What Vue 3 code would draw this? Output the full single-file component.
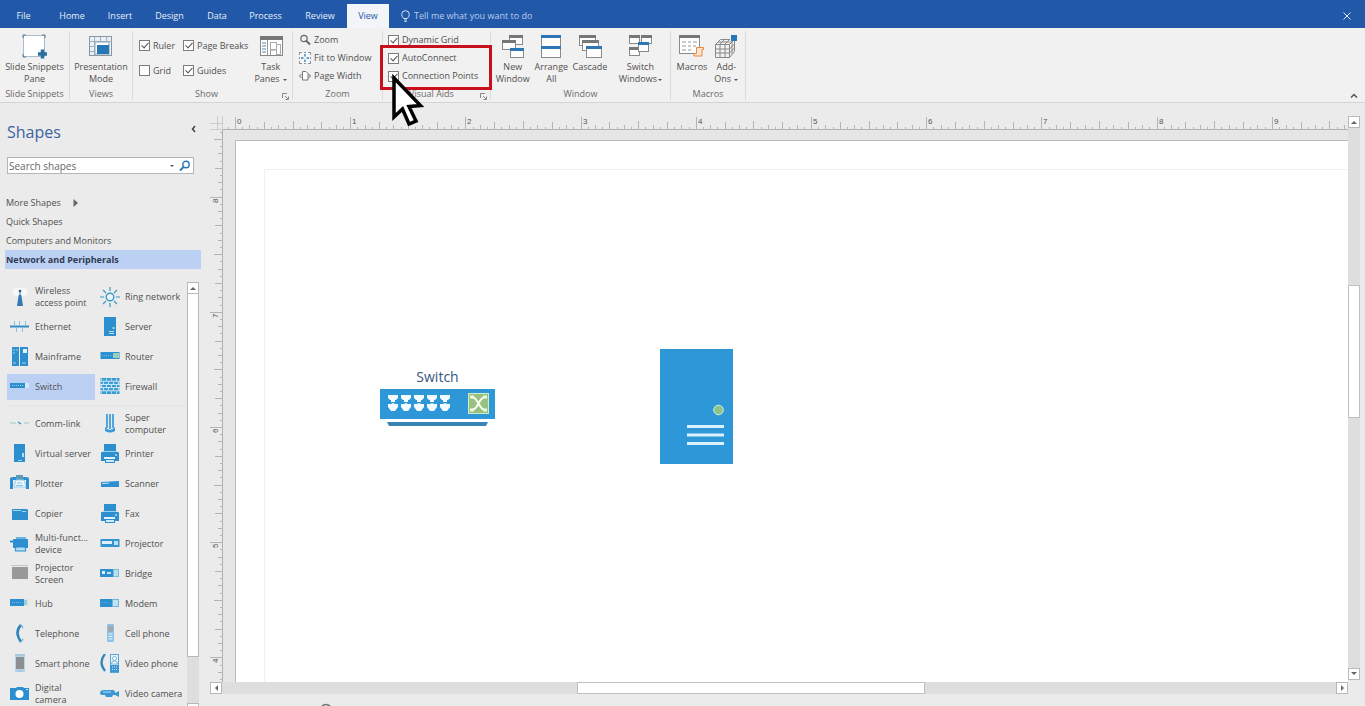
<script setup>
import { ref } from 'vue'

const tabs = [
  { name: 'File', cls: 'file' }, { name: 'Home' }, { name: 'Insert' }, { name: 'Design' },
  { name: 'Data' }, { name: 'Process' }, { name: 'Review' }, { name: 'View' },
]
const activeTab = ref('View')

const show = ref([
  { label: 'Ruler', on: true }, { label: 'Page Breaks', on: true },
  { label: 'Grid', on: false }, { label: 'Guides', on: true },
])
const aids = ref([
  { label: 'Dynamic Grid', on: true }, { label: 'AutoConnect', on: true }, { label: 'Connection Points', on: true },
])

const win = (x, y, w, h, c) =>
  `<rect x="${x + 0.5}" y="${y + 0.5}" width="${w - 1}" height="${h - 1}" fill="#fdfdfd" stroke="#8a8a8a"/><rect x="${x}" y="${y}" width="${w}" height="3" fill="${c}"/>`

const big = {
  snippet: '<rect x="1.5" y="1.5" width="21" height="21" fill="#fff" stroke="#a9bccd"/><path d="M1 4V1h3M20 1h3v3M1 20v3h3" fill="none" stroke="#5f7890"/><path d="M20.5 15.500v9M16 20h9" stroke="#2a6f9e" stroke-width="3.500"/>',
  present: '<rect x="1.500" y="2.500" width="22" height="19" fill="#e9eff5" stroke="#8a97a3"/><path d="M1 7.500h23M6.500 3v18M12.500 3v4M18.500 3v4M2 12.500h5M2 17.500h5" stroke="#9fb0be"/><rect x="7" y="8" width="14" height="12" fill="#fff" stroke="#8ba3b8"/><rect x="9" y="11" width="12" height="9" fill="#2577b5"/>',
  panes: '<rect x="1.500" y="2.500" width="22" height="19" fill="#fff" stroke="#888"/><rect x="1" y="2" width="23" height="4" fill="#777"/><path d="M8.500 6v15M11.500 21v-5h5" fill="none" stroke="#999"/><path d="M3 9h4M3 12h4M3 15h4M3 18h4" stroke="#5588bb"/><rect x="11.500" y="8.500" width="6" height="7" fill="#fff" stroke="#aaa"/><rect x="17.500" y="10.500" width="4" height="10" fill="#fff" stroke="#aaa"/>',
  newWin: win(8, 1, 14, 10, '#777') + win(1, 6, 14, 10, '#777') + win(9, 14, 14, 10, '#2e75b6'),
  arrange: win(3, 1, 20, 12, '#2e75b6') + win(3, 12, 20, 12, '#2e75b6'),
  cascade: win(1, 1, 17, 11, '#777') + win(4, 6, 17, 11, '#777') + win(8, 12, 16, 12, '#2e75b6'),
  switchWin: win(1, 1, 11, 9, '#777') + win(13, 1, 11, 9, '#777') + win(1, 13, 11, 9, '#777') + win(10, 8, 11, 10, '#2e75b6'),
  macros: win(0, 1, 21, 19, '#777') + '<path d="M3 8h4M9 8h3M14 8h4M3 12h4M9 12h3M14 12h3M3 16h4M9 16h3" stroke="#999"/><path d="M17.500 13.500h7v2h-1.500v6.500h-8v-2.500h2.500z" fill="#fbe3d0" stroke="#e58a45"/>',
  addons: '<path d="M2.500 10.500l5-5h14v12l-5 6h-14zM2.500 10.500h14v13M16.500 10.500l5-5M7 10.500v13M12 10.500v13M2.500 15h14l5-5M2.500 19h14l5-5M7 10l5-5M12 10l5-5M5 8h14v12" fill="none" stroke="#888"/><rect x="17" y="0" width="7" height="7" fill="#f0f0f0"/><rect x="18" y="1" width="6" height="6" fill="#2577b5"/>',
}
const windowBtns = [
  { icon: 'newWin', lines: ['New', 'Window'], w: 'w-new' },
  { icon: 'arrange', lines: ['Arrange', 'All'], w: 'w-arr' },
  { icon: 'cascade', lines: ['Cascade'], w: 'w-cas' },
  { icon: 'switchWin', lines: ['Switch', 'Windows'], w: 'w-swi', drop: true },
]
const zoomBtns = [
  { label: 'Zoom', art: '<circle cx="5" cy="4.500" r="3.200" fill="none" stroke="#666" stroke-width="1.200"/><path d="M7.500 7l3.500 3.500" stroke="#666" stroke-width="1.800"/>' },
  { label: 'Fit to Window', art: '<rect x=".5" y=".5" width="11" height="11" fill="#f7fafc" stroke="#8b949c"/><path d="M4 0v1M8 0v1M4 11v1M8 11v1M0 4h1M0 8h1M11 4h1M11 8h1" stroke="#f1f1f1" stroke-width="2"/><path d="M2 6h2.500M7.500 6H10M6 2v2.500M6 7.500V10" stroke="#3d80b5" stroke-width="1.400"/>' },
  { label: 'Page Width', art: '<path d="M3.500 1.500h3.500l2 2v6.500h-5.500z" fill="#fff" stroke="#777"/><path d="M2.500 4L.5 6l2 2M9.500 4l2 2-2 2" fill="none" stroke="#666"/>' },
]

const B = '#2b8fd0'
const printer = `<rect x="4" y="0" width="12" height="7" fill="${B}"/><path d="M1 9q0-1 1-1h16q1 0 1 1v8H1z" fill="${B}"/><path d="M3 7.500h14" stroke="#9fd0ee"/><rect x="4" y="13" width="11" height="2" fill="#e3f2fb"/><rect x="5.500" y="15.500" width="9" height="3" fill="#cfe8f6" stroke="${B}"/><rect x="15" y="10.500" width="2" height="1" fill="#fff"/>`
const box = (a, b) => `<rect x=".5" y="5" width="19" height="7" fill="${a}"/><rect x="13" y="6" width="6" height="5" fill="${b}"/>`
const groups = [
  [
    { n: 'Wireless\naccess point', art: '<rect x="3" y="1" width="14" height="8" rx="3" fill="#f7f7f7"/><path d="M8.700 8h2.600l1.700 11h-6z" fill="#3579b4"/><circle cx="10" cy="4" r="1.300" fill="#1d5d9b"/><path d="M10 4v5" stroke="#3579b4"/>' },
    { n: 'Ring network', art: '<circle cx="10" cy="10" r="3.800" fill="#eaf6fc" stroke="#3b9ac5" stroke-width="1.400"/><path d="M10 0v4M10 16v4M0 10h4M16 10h4M3 3l3 3M14 14l3 3M3 17l3-3M14 6l3-3" stroke="#3b9ac5" stroke-width="1.200"/>' },
    { n: 'Ethernet', art: '<path d="M0 9.500h19" stroke="#2f8fc4" stroke-width="2"/><path d="M4.500 4v5M9.500 4v5M15.500 4v5M6.500 10v5M12.500 10v5" stroke="#8cbfe0"/>' },
    { n: 'Server', art: `<rect x="4" y="0" width="12" height="19" fill="${B}"/><path d="M9 14.500h5M9 16.500h5" stroke="#bfe0f4"/><circle cx="13.500" cy="11" r="1" fill="#d5ebd0"/>` },
    { n: 'Mainframe', art: `<rect x="2" y="0" width="7" height="19" fill="${B}"/><rect x="10" y="0" width="8" height="19" fill="${B}"/><rect x="13" y="2" width="4" height="4" fill="#e5f3fb"/><path d="M3 3h2M6 3h2M3 6h2M12 16h4M3 16h3" stroke="#a5d2ee"/>` },
    { n: 'Router', art: box(B, '#9fcdbb') + '<path d="M2 8.500h9" stroke="#79bbe4" stroke-dasharray="1 1"/>' },
    { n: 'Switch', on: true, art: '<rect x="0" y="6" width="19" height="5" fill="#d8e8fb"/><rect x="0" y="6" width="15" height="5" fill="#2b8fd0"/><path d="M2 8.500h11" stroke="#a5d2ee" stroke-dasharray="1 1"/>' },
    { n: 'Firewall', art: '<rect x=".5" y="1" width="19" height="16" fill="#3a9ad2"/><path d="M0 4.200h20M0 7.400h20M0 10.600h20M0 13.800h20" stroke="#d9eefa"/><path d="M1 2.500h18M3 6h18M1 9h18M3 12h18M1 15.500h18" stroke="#c5e4f6" stroke-width="2" stroke-dasharray="1 4"/>' },
  ],
  [
    { n: 'Comm-link', art: '<path d="M0 9h6M14 9h5" stroke="#a3c9c5" stroke-width="1.200"/><path d="M8 8l3 2" stroke="#3f93bf" stroke-width="1.500"/>' },
    { n: 'Super\ncomputer', art: '<path d="M6 0h2v14H6zM9 0h2v15H9zM12 0h2v14h-2z" fill="#4fa5dc"/><path d="M5 13q5 6 10 0v4q-5 3-10 0z" fill="#3a9ad6"/>' },
    { n: 'Virtual server', art: `<rect x="4" y="0" width="11" height="18" fill="${B}"/><path d="M13 9v4" stroke="#e4f3fb" stroke-width="1.500"/><rect x="8" y="16" width="4" height="1" fill="#9fd0ee"/>` },
    { n: 'Printer', art: printer },
    { n: 'Plotter', art: `<path d="M0 5q0-2 3-2h13q3 0 3 2v10h-3V6H3v9H0z" fill="${B}"/><rect x="6" y="1" width="7" height="4" fill="#5c9cb8"/><path d="M6 6h8l2 7H4z" fill="#f1f8fd" stroke="#9fcfea"/><path d="M7 9h5M6 11.500h7" stroke="#83bfe4"/>` },
    { n: 'Scanner', art: `<path d="M1 8l18-1v6H1z" fill="${B}"/><path d="M2 9.500l7-.5" stroke="#d0e9f7"/>` },
    { n: 'Copier', art: `<path d="M2 5h15l1 1v10H2z" fill="${B}"/><path d="M3 6.500h8M12 7.500h4" stroke="#a8d5ef"/>` },
    { n: 'Fax', art: printer },
    { n: 'Multi-funct...\ndevice', art: '<path d="M3 6q0-1 1-1h14v9H3z" fill="#2b8fd0"/><path d="M6 3h10v2H6z" fill="#6ab4e2"/><path d="M0 7.500h3" stroke="#2b8fd0" stroke-width="2"/><path d="M6 13h9l1 4H5z" fill="#b5dcf3" stroke="#2b8fd0"/>' },
    { n: 'Projector', art: '<rect x=".5" y="5" width="19" height="8" fill="#3294d0"/><rect x="2" y="7" width="10" height="3" fill="#dff0fa"/><rect x="14" y="7" width="4" height="4" fill="#bfe0f3"/>' },
    { n: 'Projector\nScreen', art: '<path d="M1 1.500h17" stroke="#c5c5c5"/><rect x="2" y="3" width="16" height="12" fill="#999"/>' },
    { n: 'Bridge', art: '<rect x="0" y="5" width="13" height="8" fill="#2b8fd0"/><rect x="2" y="7" width="3" height="3" fill="#e4f3fb"/><rect x="7" y="8" width="4" height="2" fill="#bfe0f3"/><rect x="13.500" y="5.500" width="5" height="7" fill="#b9deee" stroke="#79bcdc"/>' },
    { n: 'Hub', art: '<rect x="0" y="5" width="19" height="7" fill="#dcebd9"/><rect x="0" y="5" width="14" height="7" fill="#2b8fd0"/><path d="M2 8.500h10" stroke="#79bbe4" stroke-dasharray="1 1"/><rect x="14" y="6" width="3" height="5" fill="#9dccdd"/>' },
    { n: 'Modem', art: '<rect x="0" y="5" width="12" height="8" fill="#2b8fd0"/><path d="M2 8.500h8" stroke="#5dabdc" stroke-dasharray="1 1"/><rect x="12.500" y="5.500" width="6" height="7" fill="#bfe3f0" stroke="#6fb6da"/>' },
    { n: 'Telephone', art: '<path d="M11 1q-7 7 0 17" fill="none" stroke="#2f83bd" stroke-width="2.500"/><path d="M11 1l2 3M11 18l2-3" stroke="#7db7dc" stroke-width="1.500"/>' },
    { n: 'Cell phone', art: '<rect x="7" y="0" width="7" height="18" rx="1" fill="#8fc3e4"/><rect x="8" y="2" width="5" height="6" fill="#a3a9ae"/><path d="M8.500 10h4M8.500 12.500h4M8.500 15h4" stroke="#e4f3fb"/>' },
    { n: 'Smart phone', art: '<rect x="5" y="0" width="10" height="18" fill="#bcd5e6"/><rect x="6" y="3" width="8" height="12" fill="#8c8f91"/><path d="M5 1h10M7 17h6" stroke="#8fc0e0"/>' },
    { n: 'Video phone', art: '<path d="M5 0q-7 8 0 17" fill="none" stroke="#2f83bd" stroke-width="2.200"/><rect x="10.500" y=".5" width="8" height="18" fill="#e6f2fa" stroke="#5ba7d8"/><circle cx="14.500" cy="4.500" r="2" fill="#fff" stroke="#78b3d8"/><path d="M11.500 10q0-3 3-3t3 3z" fill="#fff" stroke="#78b3d8"/><rect x="10" y="11" width="9" height="7" fill="#3b97d3"/><path d="M12 13h5M12 15.500h5" stroke="#bfe0f3" stroke-dasharray="1 1"/>' },
    { n: 'Digital\ncamera', art: '<path d="M0 4h6l1-1h6l1 1h5v12H0z" fill="#2b8fd0"/><circle cx="9.500" cy="10" r="4" fill="#fff"/><rect x="16" y="5" width="2" height="1" fill="#cfe8f6"/>' },
    { n: 'Video camera', art: '<path d="M0 9q0-3 4-3h9q2 0 2 3l4-2v6l-4-2H13l-1 2H6l-1-2H2q-2 0-2-2z" fill="#3b97d3"/><path d="M3 8h8" stroke="#b8ddf3"/>' },
  ],
]
const stencils = ['Quick Shapes', 'Computers and Monitors', 'Network and Peripherals']
const activeStencil = ref('Network and Peripherals')

/* Rulers: one inch is 115.2px, divided into sixteenths */
const step = 7.2
const tickLen = (i) => (i % 16 === 0 ? 13 : i % 8 === 0 ? 9 : i % 4 === 0 ? 8 : i % 2 === 0 ? 5 : 3)
const hTicks = Array.from({ length: 158 }, (_, k) => k - 1).map((i) => ({ p: Math.round(12 + i * step) + 0.5, l: tickLen(i) }))
const hNums = Array.from({ length: 10 }, (_, i) => ({ p: Math.round(12 + i * 16 * step) + 2, t: i }))
const vTicks = Array.from({ length: 77 }, (_, k) => k - 1).map((i) => ({ p: Math.round(10 + i * step) - 0.5, l: tickLen(i + 8) }))
const vNums = [8, 7, 6, 5, 4].map((t, k) => ({ p: Math.round(10 + (8 + k * 16) * step) + 5, t }))
</script>

<template>
  <div class="app">
    <header class="tabbar">
      <nav class="tabs">
        <button v-for="t in tabs" :key="t.name" class="tab" :class="[{ active: activeTab === t.name }, 'tab-' + t.name.toLowerCase()]" @click="activeTab = t.name">{{ t.name }}</button>
      </nav>
      <button class="tell">
        <svg width="9" height="12" viewBox="0 0 9 12"><path d="M2.700 8.500Q.7 6.500.7 4.500a3.800 3.800 0 0 1 7.600 0q0 2-2 4zM3 10h3M3.500 11.500h2" fill="none" stroke="#d3e1f5" /></svg>
        Tell me what you want to do
      </button>
      <button class="close" aria-label="Close"><svg width="8" height="8" viewBox="0 0 8 8"><path d="M.5.5l7 7M7.500.5l-7 7" stroke="#dfe8f6" /></svg></button>
    </header>

    <section class="ribbon">
      <div class="group g-snip">
        <div class="gbody"><button class="big"><svg width="26" height="26" viewBox="-1 0 26 26" v-html="big.snippet" /><span>Slide Snippets<br>Pane</span></button></div>
        <div class="gname">Slide Snippets</div>
      </div>
      <div class="group g-views">
        <div class="gbody"><button class="big"><svg width="26" height="26" viewBox="0 0 26 26" v-html="big.present" /><span>Presentation<br>Mode</span></button></div>
        <div class="gname">Views</div>
      </div>
      <div class="group g-show">
        <div class="gbody">
          <div class="checks">
            <label v-for="c in show" :key="c.label" class="check"><input v-model="c.on" type="checkbox">{{ c.label }}</label>
          </div>
          <button class="big"><svg width="26" height="26" viewBox="-1 0 26 26" v-html="big.panes" /><span>Task<br>Panes <i class="drop" /></span></button>
        </div>
        <div class="gname">Show<button class="launch" aria-label="Show settings"><svg width="7" height="7" viewBox="0 0 7 7"><path d="M.5 5V.5H5M3 3l3 3M6.500 3.500v3h-3" fill="none" stroke="#888" /></svg></button></div>
      </div>
      <div class="group g-zoom">
        <div class="gbody col">
          <button v-for="z in zoomBtns" :key="z.label" class="small"><svg width="12" height="12" viewBox="0 0 12 12" v-html="z.art" />{{ z.label }}</button>
        </div>
        <div class="gname">Zoom</div>
      </div>
      <div class="group g-aids">
        <div class="gbody col">
          <label v-for="c in aids" :key="c.label" class="check"><input v-model="c.on" type="checkbox">{{ c.label }}</label>
        </div>
        <div class="gname">Visual Aids<button class="launch" aria-label="Visual aids settings"><svg width="7" height="7" viewBox="0 0 7 7"><path d="M.5 5V.5H5M3 3l3 3M6.500 3.500v3h-3" fill="none" stroke="#888" /></svg></button></div>
        <div class="callout" />
        <svg class="pointer" width="34" height="54" viewBox="0 0 34 54"><path d="M3 4v39l8.500-8 6.500 15 7-3-7-14.500 11.500-1z" fill="#fff" stroke="#000" stroke-width="3.500" /></svg>
      </div>
      <div class="group g-window">
        <div class="gbody">
          <button v-for="b in windowBtns" :key="b.icon" class="big" :class="b.w">
            <svg width="26" height="26" :viewBox="b.icon === 'arrange' ? '0 0 26 26' : '-1 0 26 26'" v-html="big[b.icon]" />
            <span><template v-for="(l, i) in b.lines" :key="l"><br v-if="i">{{ l }}</template><i v-if="b.drop" class="drop" /></span>
          </button>
        </div>
        <div class="gname">Window</div>
      </div>
      <div class="group g-macros">
        <div class="gbody">
          <button class="big"><svg width="26" height="26" viewBox="0 0 26 26" v-html="big.macros" /><span>Macros</span></button>
          <button class="big"><svg width="26" height="26" viewBox="0 0 26 26" v-html="big.addons" /><span>Add-<br>Ons <i class="drop" /></span></button>
        </div>
        <div class="gname">Macros</div>
      </div>
      <button class="collapse" aria-label="Collapse ribbon"><svg width="8" height="5" viewBox="0 0 8 5"><path d="M1 4.500l3-3 3 3" fill="none" stroke="#555" stroke-width="1.500" /></svg></button>
    </section>

    <div class="work">
      <aside class="side">
        <div class="side-head">
          <h1>Shapes</h1>
          <button class="fold" aria-label="Collapse shapes pane"><svg width="5" height="8" viewBox="0 0 5 8"><path d="M4 1L1.500 4 4 7" fill="none" stroke="#444" stroke-width="1.500" /></svg></button>
        </div>
        <form class="search" @submit.prevent>
          <input type="text" placeholder="Search shapes" aria-label="Search shapes">
          <i class="drop" />
          <button aria-label="Search"><svg width="12" height="12" viewBox="0 0 12 12"><circle cx="7" cy="4.500" r="3.200" fill="none" stroke="#2e75b6" stroke-width="1.400" /><path d="M4.500 7L1 10.500" stroke="#2e75b6" stroke-width="2" /></svg></button>
        </form>
        <nav class="stencils">
          <button class="stencil">More Shapes <svg width="6" height="8" viewBox="0 0 6 8"><path d="M.5 0v8L5 4z" fill="#666" /></svg></button>
          <button v-for="s in stencils" :key="s" class="stencil" :class="{ on: activeStencil === s }" @click="activeStencil = s">{{ s }}</button>
        </nav>
        <div class="shapes">
          <div class="lists">
            <div v-for="(g, gi) in groups" :key="gi" class="list">
              <button v-for="s in g" :key="s.n" class="shape" :class="{ on: s.on }">
                <svg width="20" height="20" viewBox="0 0 20 20" v-html="s.art" /><span>{{ s.n }}</span>
              </button>
            </div>
          </div>
          <div class="vbar">
            <button class="sb" aria-label="Scroll up"><i class="up" /></button>
            <div class="side-thumb" />
            <div class="side-rest" />
            <button class="sb" aria-label="Scroll down"><i class="down" /></button>
          </div>
        </div>
      </aside>

      <main class="drawing">
        <svg class="hruler" height="14">
          <path d="M0 13.500H1200" stroke="#b0b0b0" />
          <path v-for="t in hTicks" :key="t.p" :d="`M${t.p} 14v-${t.l}`" stroke="#b4b4b4" />
          <text v-for="n in hNums" :key="n.t" :x="n.p" y="8">{{ n.t }}</text>
        </svg>
        <svg class="corner" width="13" height="14"><path d="M7.500 0v14M0 7.500h13M0 13.500h13M12.500 0v14" stroke="#ccc" /></svg>
        <svg class="vruler" width="13">
          <path d="M12.500 0V700" stroke="#b0b0b0" />
          <path v-for="t in vTicks" :key="t.p" :d="`M13 ${t.p}h-${t.l}`" stroke="#b4b4b4" />
          <text v-for="n in vNums" :key="n.t" :transform="`translate(8 ${n.p}) rotate(-90)`">{{ n.t }}</text>
        </svg>
        <div class="canvas">
          <div class="page">
            <div class="margins" />
            <div class="node switch">
              <span>Switch</span>
              <svg width="115" height="37" viewBox="0 0 115 37">
                <rect width="115" height="30" fill="#2e97d8" />
                <path d="M7 33h101l-2 4H9z" fill="#3784b5" />
                <g v-for="i in 5" :key="i" :transform="`translate(${8 + (i - 1) * 13} 6)`" fill="#f2fbff">
                  <path d="M0 0h10v3l-2 2H7v2H3V5H2L0 3zM0 9h3l2-1 2 1h3v3l-3 4H3l-3-4z" />
                </g>
                <rect x="88.500" y="4.500" width="20" height="20" fill="#98c080" stroke="#cfeccd" />
                <path d="M92 8q3 0 6.500 6.500T105 21M92 21q3 0 6.500-6.500T105 8" fill="none" stroke="#f8fff3" stroke-width="2" />
                <path d="M90 6.500h4v3h-4zM103 6.500h4v3h-4zM90 19.500h4v3h-4zM103 19.500h4v3h-4z" fill="#f0f8dc" />
              </svg>
            </div>
            <svg class="node server" width="73" height="115" viewBox="0 0 73 115">
              <rect width="73" height="115" fill="#2e97d8" />
              <circle cx="58.500" cy="61" r="4.800" fill="#8dc48a" stroke="#c9f0dd" />
              <path d="M27 77.500h37M27 86h37M27 94.500h37" stroke="#d9f2fd" stroke-width="3" />
            </svg>
          </div>
        </div>
        <div class="vbar main-v">
          <button class="sb" aria-label="Scroll up"><i class="up" /></button>
          <div class="gap-a" /><div class="thumb-v" /><div class="gap-b" />
          <button class="sb" aria-label="Scroll down"><i class="down" /></button>
        </div>
        <div class="hbar">
          <button class="sb" aria-label="Scroll left"><i class="left" /></button>
          <div class="gap-c" /><div class="thumb-h" /><div class="gap-d" />
          <button class="sb" aria-label="Scroll right"><i class="right" /></button>
        </div>
      </main>
    </div>
    <footer class="status"><svg width="12" height="3" viewBox="0 0 12 3"><path d="M1 4q5-5 10 0" fill="none" stroke="#777" stroke-width="1.500" /></svg></footer>
  </div>
</template>

<style>
body { margin: 0; overflow: hidden; }
</style>

<style scoped>
.app { height: 100vh; display: flex; flex-direction: column; background: #ebebeb; color: #505050; font: 9px/12px "Open Sans", "Noto Sans", sans-serif; overflow: hidden; }
* { box-sizing: border-box; }
button { font: inherit; color: inherit; background: none; border: 0; padding: 0; margin: 0; white-space: nowrap; }
svg { display: block; flex: none; }

.tabbar { flex: none; height: 28px; background: #2159a8; display: flex; align-items: stretch; color: #e6eefa; }
.tabs { display: flex; padding-top: 4px; }
.tab { height: 24px; width: 50px; }
.tab-file { width: 47px; }
.tab-insert { width: 46px; }
.tab-design { width: 53px; }
.tab-data { width: 42px; }
.tab-process { width: 55px; }
.tab-review { width: 54px; }
.tab-view { width: 42px; }
.tab.active { background: #f3f5f9; color: #2159a8; }
.tell { display: flex; align-items: center; gap: 4px; margin: 4px 0 0 12px; color: #b9cdec; }
.close { margin: 3px 14px 0 auto; }

.ribbon { flex: none; height: 75px; background: #f1f1f1; border-bottom: 1px solid #d4d4d4; padding: 3px 0 1px; display: flex; position: relative; }
.group { position: relative; flex: none; display: flex; flex-direction: column; border-right: 1px solid #dcdcdc; height: 69px; }
.gbody { height: 58px; display: flex; justify-content: center; }
.gbody.col { flex-direction: column; justify-content: flex-start; }
.gname { text-align: center; color: #6b6b6b; line-height: 12px; padding-top: 0; margin-top: 2px; }
.g-snip { width: 70px; }
.g-views { width: 63px; }
.g-show { width: 160px; }
.g-zoom { width: 90px; }
.g-zoom .gbody { padding-left: 6px; }
.g-aids { width: 108px; }
.g-aids .gbody { padding-left: 5px; }
.g-aids .gname { padding-right: 10px; }
.g-show .gname { padding-right: 12px; }
.g-window { width: 180px; }
.g-macros { width: 75px; }
.g-show .gbody { justify-content: space-between; padding: 0 5px 0 6px; }
.g-macros .gbody { gap: 6px; }
.g-window .gbody { justify-content: flex-start; padding-left: 1px; }
.w-new { width: 42px; }
.w-arr { width: 36px; }
.w-cas { width: 42px; }
.w-swi { width: 60px; }
.big { display: flex; flex-direction: column; align-items: center; gap: 1px; padding-top: 3px; line-height: 12px; }
.checks { display: grid; grid-template-columns: 44px 66px; grid-auto-rows: 25px; padding-top: 2px; }
.check { display: flex; align-items: center; gap: 3px; white-space: nowrap; }
.col .check, .small { height: 18px; flex: none; }
.check input { appearance: none; flex: none; position: relative; width: 11px; height: 11px; margin: 0; border: 1px solid #7c7c7c; background: #fdfdfd; }
.check input:checked::before { content: ""; position: absolute; left: 3px; top: 0; width: 3px; height: 6px; border: solid #555; border-width: 0 1px 1px 0; transform: rotate(42deg); }
.small { display: flex; align-items: center; gap: 3px; }
.drop { display: inline-block; vertical-align: middle; border: 2px solid transparent; border-top-color: #555; border-bottom: 0; margin-left: 1px; }
.launch { position: absolute; right: 3px; bottom: 0; }
.callout { position: absolute; left: -3px; top: 14px; width: 112px; height: 45px; border: 3px solid #c8101c; z-index: 2; }
.pointer { position: absolute; left: 8px; top: 43px; z-index: 3; }
.collapse { position: absolute; right: 7px; bottom: 4px; }

.work { flex: 1; min-height: 0; display: flex; }
.side { width: 205px; flex: none; display: flex; flex-direction: column; min-height: 0; margin-bottom: -21px; }
.side-head { display: flex; justify-content: space-between; padding: 17px 9px 0 7px; }
.side-head h1 { margin: 0; font: 16px/24px "Open Sans", sans-serif; color: #3d64a0; }
.fold { height: 18px; }
.search { margin: 13px 11px 0 7px; height: 17px; border: 1px solid #b5b5b5; background: #fff; display: flex; align-items: center; padding-right: 2px; }
.search input { flex: 1; min-width: 0; border: 0; padding: 0 1px; background: none; font: 10px/14px "Open Sans", sans-serif; outline: 0; }
.search input::placeholder { color: #666; opacity: 1; }
.search button { margin-left: 5px; }
.stencils { margin: 19px 4px 0 5px; display: flex; flex-direction: column; }
.stencil { height: 19px; display: flex; align-items: center; gap: 12px; padding: 0 1px; }
.stencil.on { background: #bcd0f3; font-weight: 700; color: #2f3b52; }
.shapes { flex: 1; min-height: 0; margin: 13px 6px 0 7px; display: flex; justify-content: space-between; overflow: hidden; }
.lists { width: 178px; overflow: hidden; }
.list { display: grid; grid-template-columns: 88px 88px; column-gap: 2px; grid-auto-rows: 30px; }
.list + .list { border-top: 1px solid #e2e2e2; margin-top: 3px; padding-top: 3px; }
.shape { display: flex; align-items: center; gap: 5px; padding: 0 0 0 3px; white-space: pre-line; text-align: left; margin: 2px 0; }
.shape.on { background: #bcd0f3; }
.vbar { width: 12px; display: flex; flex-direction: column; background: #dedede; }
.sb { width: 12px; height: 12px; flex: none; background: #fff; border: 1px solid #b8b8b8; display: grid; place-items: center; }
.sb i { border: 3px solid transparent; }
.sb .up { border-top: 0; border-bottom-color: #666; }
.sb .down { border-bottom: 0; border-top-color: #666; }
.sb .left { border-left: 0; border-right-color: #666; }
.sb .right { border-right: 0; border-left-color: #666; }
.side-thumb { flex: 363; background: #fff; border: 1px solid #b8b8b8; border-top: 0; }
.side-rest { flex: 46; }

.drawing { flex: 1; min-width: 0; padding: 13px 5px 0; display: grid; grid-template-columns: 13px 1fr 12px; grid-template-rows: 14px 1fr 12px; }
.corner { grid-area: 1 / 1; }
.hruler { grid-area: 1 / 2; width: 100%; overflow: hidden; }
.vruler { grid-area: 2 / 1; height: 100%; overflow: hidden; }
.hruler text, .vruler text { font: 8px "Liberation Sans", sans-serif; fill: #555; }
.canvas { grid-area: 2 / 2; min-height: 0; padding: 10px 0 0 12px; background: #e6e6e6; display: flex; }
.page { position: relative; flex: 1; background: #fff; border: solid #bdbdbd; border-width: 1px 0 0 1px; overflow: hidden; }
.margins { position: absolute; left: 28px; top: 28px; right: 0; bottom: 0; border: solid #f0f0f0; border-width: 1px 0 0 1px; }
.node { position: absolute; }
.switch { left: 144px; top: 226px; display: flex; flex-direction: column; align-items: center; gap: 2px; font: 14px/20px "Open Sans", sans-serif; color: #35557f; }
.server { left: 424px; top: 208px; }
.main-v { grid-area: 1 / 3 / 3 / 4; margin-bottom: 2px; }
.gap-a { flex: 157; }
.thumb-v { flex: 132; background: #fff; border: 1px solid #c0c0c0; }
.gap-b { flex: 250; }
.hbar { grid-area: 3 / 1 / 4 / 3; display: flex; background: #dedede; }
.gap-c { flex: 355; }
.thumb-h { flex: 347; background: #fff; border: 1px solid #c0c0c0; }
.gap-d { flex: 411; }
.status { flex: none; height: 12px; display: flex; align-items: flex-end; padding-left: 320px; }
</style>
